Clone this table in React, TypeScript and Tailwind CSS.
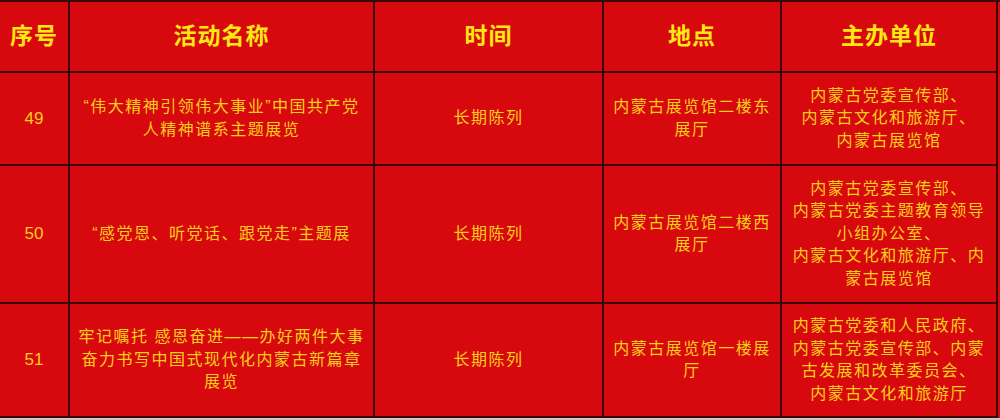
const rows = [
  {
    no: "49",
    name: ["“伟大精神引领伟大事业”中国共产党", "人精神谱系主题展览"],
    time: "长期陈列",
    place: ["内蒙古展览馆二楼东", "展厅"],
    org: ["内蒙古党委宣传部、", "内蒙古文化和旅游厅、", "内蒙古展览馆"],
    h: "h-[93px]",
  },
  {
    no: "50",
    name: ["“感党恩、听党话、跟党走”主题展"],
    time: "长期陈列",
    place: ["内蒙古展览馆二楼西", "展厅"],
    org: [
      "内蒙古党委宣传部、",
      "内蒙古党委主题教育领导",
      "小组办公室、",
      "内蒙古文化和旅游厅、内",
      "蒙古展览馆",
    ],
    h: "h-[138px]",
  },
  {
    no: "51",
    name: ["牢记嘱托 感恩奋进——办好两件大事", "奋力书写中国式现代化内蒙古新篇章", "展览"],
    time: "长期陈列",
    place: ["内蒙古展览馆一楼展", "厅"],
    org: [
      "内蒙古党委和人民政府、",
      "内蒙古党委宣传部、内蒙",
      "古发展和改革委员会、",
      "内蒙古文化和旅游厅",
    ],
    h: "h-[114px]",
  },
];

const cell =
  "flex flex-col items-center justify-center border-r-2 border-b-2 border-[#3a0606] text-center whitespace-nowrap";
const body = "text-[16px] leading-[22.5px] tracking-[1.5px] text-[#fccf17]";

const Lines = ({ lines }: { lines: string[] }) => (
  <>
    {lines.map((l, i) => (
      <span key={i} className="block">
        {l}
      </span>
    ))}
  </>
);

export default function App() {
  return (
    <div className="w-[1000px] h-[420px] bg-[#c9c9c9] overflow-hidden">
      <div
        className="h-[418px] bg-[#d7080e] border-t-2 border-[#3a0606]"
        style={{ fontFamily: '"Liberation Sans", "Noto Sans CJK SC", sans-serif' }}
      >
        <div className="grid grid-cols-[70px_305px_229px_178px_216px]">
          {["序号", "活动名称", "时间", "地点", "主办单位"].map((t) => (
            <div
              key={t}
              className={`${cell} h-[71px] text-[23px] font-bold text-[#ffe812] tracking-[1px]`}
            >
              {t}
            </div>
          ))}
          {rows.map((r) => (
            <div key={r.no} className="contents">
              <div className={`${cell} ${r.h} text-[17px] text-[#fccf17]`}>{r.no}</div>
              <div className={`${cell} ${r.h} ${body}`}>
                <Lines lines={r.name} />
              </div>
              <div className={`${cell} ${r.h} ${body}`}>{r.time}</div>
              <div className={`${cell} ${r.h} ${body}`}>
                <Lines lines={r.place} />
              </div>
              <div className={`${cell} ${r.h} ${body}`}>
                <Lines lines={r.org} />
              </div>
            </div>
          ))}
        </div>
      </div>
    </div>
  );
}
